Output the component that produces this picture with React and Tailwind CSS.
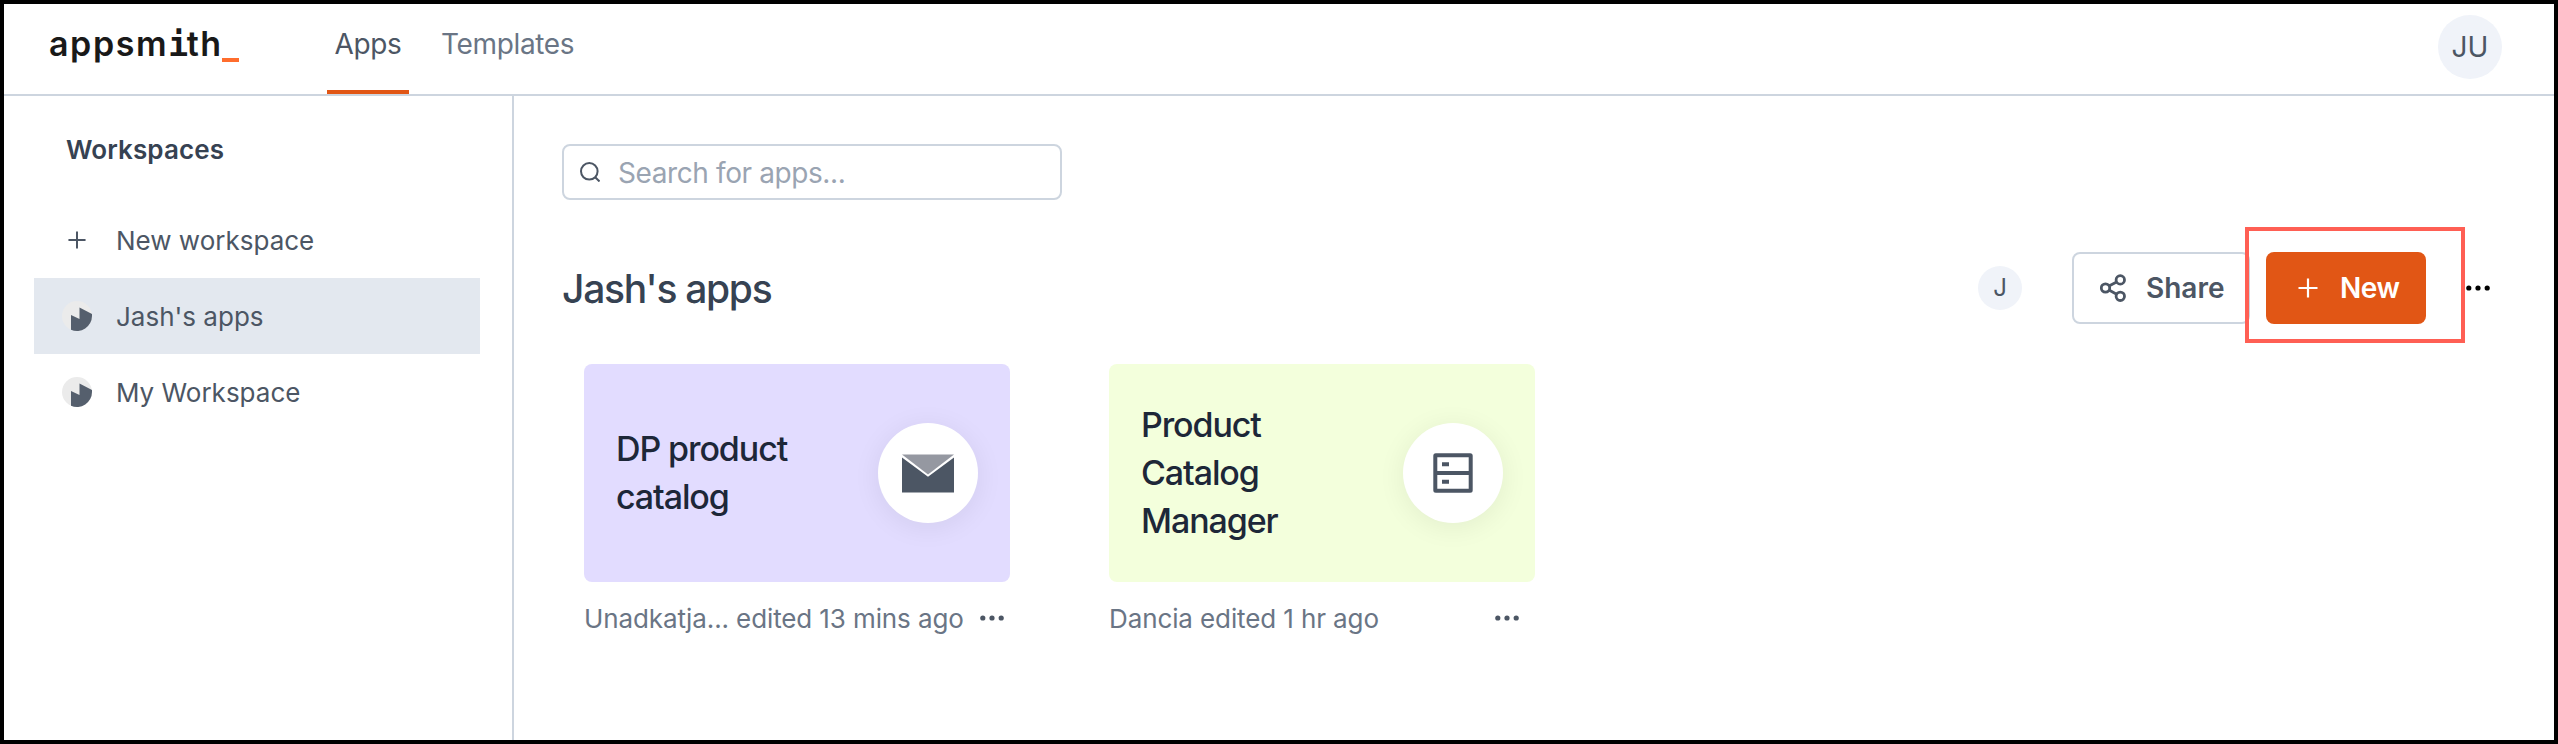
import React from 'react';

function Plus({ className }) {
  return (
    <svg viewBox="0 0 20 20" className={className} fill="none" stroke="currentColor" strokeWidth="2.2">
      <path d="M10 0.5v19M0.5 10h19" />
    </svg>
  );
}

function Dots({ className }) {
  return (
    <svg viewBox="0 0 24 6" className={className} fill="currentColor">
      <circle cx="2.8" cy="3" r="2.6" />
      <circle cx="12" cy="3" r="2.6" />
      <circle cx="21.2" cy="3" r="2.6" />
    </svg>
  );
}

function WorkspaceIcon() {
  return (
    <svg viewBox="0 0 30 30" className="h-[30px] w-[30px]">
      <circle cx="15" cy="15" r="15" fill="#ebebeb" />
      <path d="M9 14l8.5 4V6.500L30 13v2a15 15 0 0 1-21 13.700z" fill="#555f6d" />
    </svg>
  );
}

function Envelope() {
  return (
    <svg viewBox="0 0 52 39" className="h-[39px] w-[52px]">
      <path d="M0 0.500h52L26 20.500z" fill="#9598a1" />
      <path d="M0 3.500L26 22.800L52 3.500V38.500H0z" fill="#4c5664" />
    </svg>
  );
}

function Server() {
  return (
    <svg viewBox="0 0 40 40" className="h-10 w-10" fill="none" stroke="#4c5664" strokeWidth="4">
      <rect x="2.300" y="2.300" width="35.400" height="35.400" rx="0.500" />
      <path d="M2 20h36M9 11.300h7M9 28.700h7" />
    </svg>
  );
}

function Share() {
  return (
    <svg viewBox="0 0 26 28" className="h-7 w-[26px]" fill="none" stroke="#4c5664" strokeWidth="2.8">
      <circle cx="5.500" cy="14" r="4.200" />
      <circle cx="20.300" cy="5.900" r="4.200" />
      <circle cx="20.300" cy="22.300" r="4.200" />
      <path d="M9 12l7.600-4M9 16l7.600 4.200" />
    </svg>
  );
}

function WorkspaceRow({ icon, label, active }) {
  return (
    <div className={`flex h-[76px] items-center pl-7 text-[26px] text-[#4c5664] ${active ? 'bg-[#e3e8ef]' : ''}`}>
      <span className="flex w-[30px] justify-center">{icon}</span>
      <span className="ml-6">{label}</span>
    </div>
  );
}

function AppCard({ title, color, icon, caption, dots }) {
  return (
    <div className="w-[426px]">
      <div className={`flex h-[218px] items-center justify-between rounded-lg px-8 ${color}`}>
        <div className="w-[200px] text-[34px] leading-[48px] font-medium tracking-[-1.1px] text-[#1d2738]">{title}</div>
        <div className="flex h-[100px] w-[100px] items-center justify-center rounded-full bg-white shadow-[0_4px_28px_rgba(0,0,0,0.07)]">
          {icon}
        </div>
      </div>
      <div className="flex h-[72px] items-center justify-between text-[26px] tracking-[-0.11px] text-[#6a7585]">
        <span className="pt-px whitespace-nowrap">{caption}</span>
        <Dots className={`h-[6px] w-6 text-[#4c5664] ${dots}`} />
      </div>
    </div>
  );
}

export default function App() {
  return (
    <div className="flex h-[744px] w-[2558px] flex-col overflow-hidden border-4 border-black bg-white font-['Inter',sans-serif]">
      <header className="flex h-[92px] shrink-0 border-b-2 border-[#cdd5df]">
        <div className="ml-[45px] flex w-[278px] items-start pt-[16px]">
          <span className="w-[173px] text-[34px] leading-[48px] font-semibold tracking-[1.6px] whitespace-nowrap text-[#191919]">
            appsm<span className="font-['DejaVu_Sans_Mono',monospace] text-[33px] leading-none font-bold tracking-[-1.5px]">i</span>th
          </span>
          <span className="mt-[38px] h-1 w-[17px] bg-[#ff6d2d]" />
        </div>
        <nav className="flex text-[28px] leading-[34px] tracking-[-0.35px]">
          <div className="h-[90px] w-[82px] border-b-4 border-[#e15615] pt-[23px] text-center text-[#4c5664]">Apps</div>
          <div className="ml-8 pt-[23px] text-[#6a7585]">Templates</div>
        </nav>
        <div className="mt-[11px] mr-[52px] ml-auto flex h-16 w-16 items-center justify-center rounded-full bg-[#f0f3f9] text-[28px] text-[#4c5664]">JU</div>
      </header>
      <div className="flex flex-1">
        <aside className="w-[510px] shrink-0 border-r-2 border-[#cdd5df] pr-8 pl-[30px]">
          <h2 className="mt-[38px] mb-[36px] ml-8 h-8 text-[26px] leading-8 font-semibold tracking-[0.1px] text-[#364252]">Workspaces</h2>
          <WorkspaceRow icon={<Plus className="h-[18px] w-[18px]" />} label="New workspace" />
          <WorkspaceRow icon={<WorkspaceIcon />} label="Jash's apps" active />
          <WorkspaceRow icon={<WorkspaceIcon />} label="My Workspace" />
        </aside>
        <main className="flex-1 pt-12 pl-12">
          <div className="flex h-14 w-[500px] items-center rounded-lg border-2 border-[#cdd5df] pl-[16px]">
            <svg viewBox="0 0 20 20" className="h-5 w-5" fill="none" stroke="#4c5664" strokeWidth="2">
              <circle cx="9.300" cy="9.300" r="8.300" />
              <path d="M15.200 15.200l4.300 4.300" />
            </svg>
            <span className="ml-[18px] pt-[2px] text-[28px] tracking-[-0.4px] text-[#9aa4b2]">Search for apps...</span>
          </div>
          <div className="mt-[52px] flex h-[72px] items-center">
            <h1 className="pt-[3px] text-[39px] font-medium tracking-[-1.3px] text-[#364252]">Jash's apps</h1>
            <div className="ml-auto flex h-11 w-11 items-center justify-center rounded-full bg-[#f0f3f9] text-[24px] text-[#4c5664]">J</div>
            <div className="ml-[50px] flex h-[72px] w-[178px] items-center rounded-lg border-2 border-[#cdd5df] pl-[26px] text-[28px] font-semibold text-[#4c5664]">
              <Share />
              <span className="ml-5">Share</span>
            </div>
            <div className="relative ml-4 flex h-[72px] w-[160px] items-center rounded-lg bg-[#e15615] pl-8 text-[28px] font-semibold text-white">
              <Plus className="h-5 w-5" />
              <span className="ml-[22px] tracking-[-0.4px]">New</span>
              <div className="absolute top-[-25px] left-[-21px] h-[116px] w-[220px] border-4 border-[#ff5f54]" />
            </div>
            <Dots className="mr-16 ml-10 h-[6px] w-6 text-black" />
          </div>
          <div className="mt-10 ml-[22px] flex gap-[99px]">
            <AppCard title="DP product catalog" color="bg-[#e2dcff]" icon={<Envelope />} caption="Unadkatja... edited 13 mins ago" dots="mr-1.5" />
            <AppCard title="Product Catalog Manager" color="bg-[#f3ffdc]" icon={<Server />} caption="Dancia edited 1 hr ago" dots="mr-4" />
          </div>
        </main>
      </div>
    </div>
  );
}
